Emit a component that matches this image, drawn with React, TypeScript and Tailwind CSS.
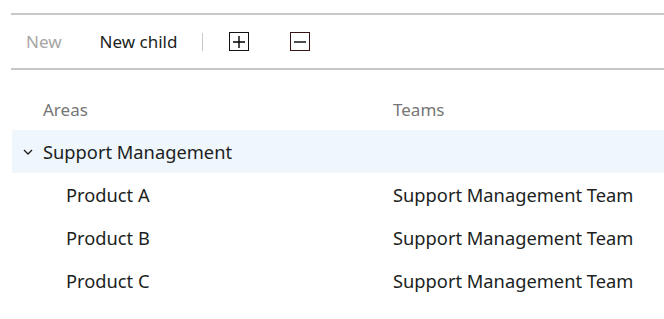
import React from "react";

const font = { fontFamily: '"Noto Sans", "Open Sans", sans-serif' };

export default function App() {
  const rows = ["Product A", "Product B", "Product C"];
  return (
    <div className="w-[664px] h-[319px] bg-white text-[#201f1e] overflow-hidden" style={font}>
      <div className="pt-[13px] pl-[11px]">
        <div className="border-t-2 border-b-2 border-[#c8c8c8] h-[57px] flex items-center text-[17px]">
          <span className="ml-[15px] text-[#a6a6a6]">New</span>
          <span className="ml-[38px]">New child</span>
          <span className="ml-[25px] w-px h-[18px] bg-[#c8c8c8]" />
          <span className="ml-[26px] w-[20px] h-[19px] border-[1.5px] border-[#111] flex items-center justify-center">
            <svg width="14" height="14" viewBox="0 0 14 14">
              <path d="M7 1v12M1 7h12" stroke="#000" strokeWidth="1.4" />
            </svg>
          </span>
          <span className="ml-[41px] w-[20px] h-[19px] border-[1.5px] border-[#3a1414] flex items-center justify-center">
            <svg width="14" height="14" viewBox="0 0 14 14">
              <path d="M1 7h12" stroke="#000" strokeWidth="1.4" />
            </svg>
          </span>
        </div>
      </div>
      <div className="pl-[12px] mt-[20px]">
        <div className="flex items-center h-[40px] text-[17px] text-[#767676]">
          <span className="ml-[31px] w-[350px]">Areas</span>
          <span>Teams</span>
        </div>
        <div className="flex items-center h-[43px] bg-[#eff6fc] text-[18.3px]">
          <span className="ml-[11px] w-[20px]">
            <svg width="10" height="10" viewBox="0 0 10 10">
              <path d="M1 3l4 4 4-4" stroke="#201f1e" strokeWidth="1.3" fill="none" />
            </svg>
          </span>
          <span>Support Management</span>
        </div>
        {rows.map((r) => (
          <div key={r} className="flex items-center h-[43px] text-[18.3px]">
            <span className="ml-[54px] w-[327px]">{r}</span>
            <span>Support Management Team</span>
          </div>
        ))}
      </div>
    </div>
  );
}
